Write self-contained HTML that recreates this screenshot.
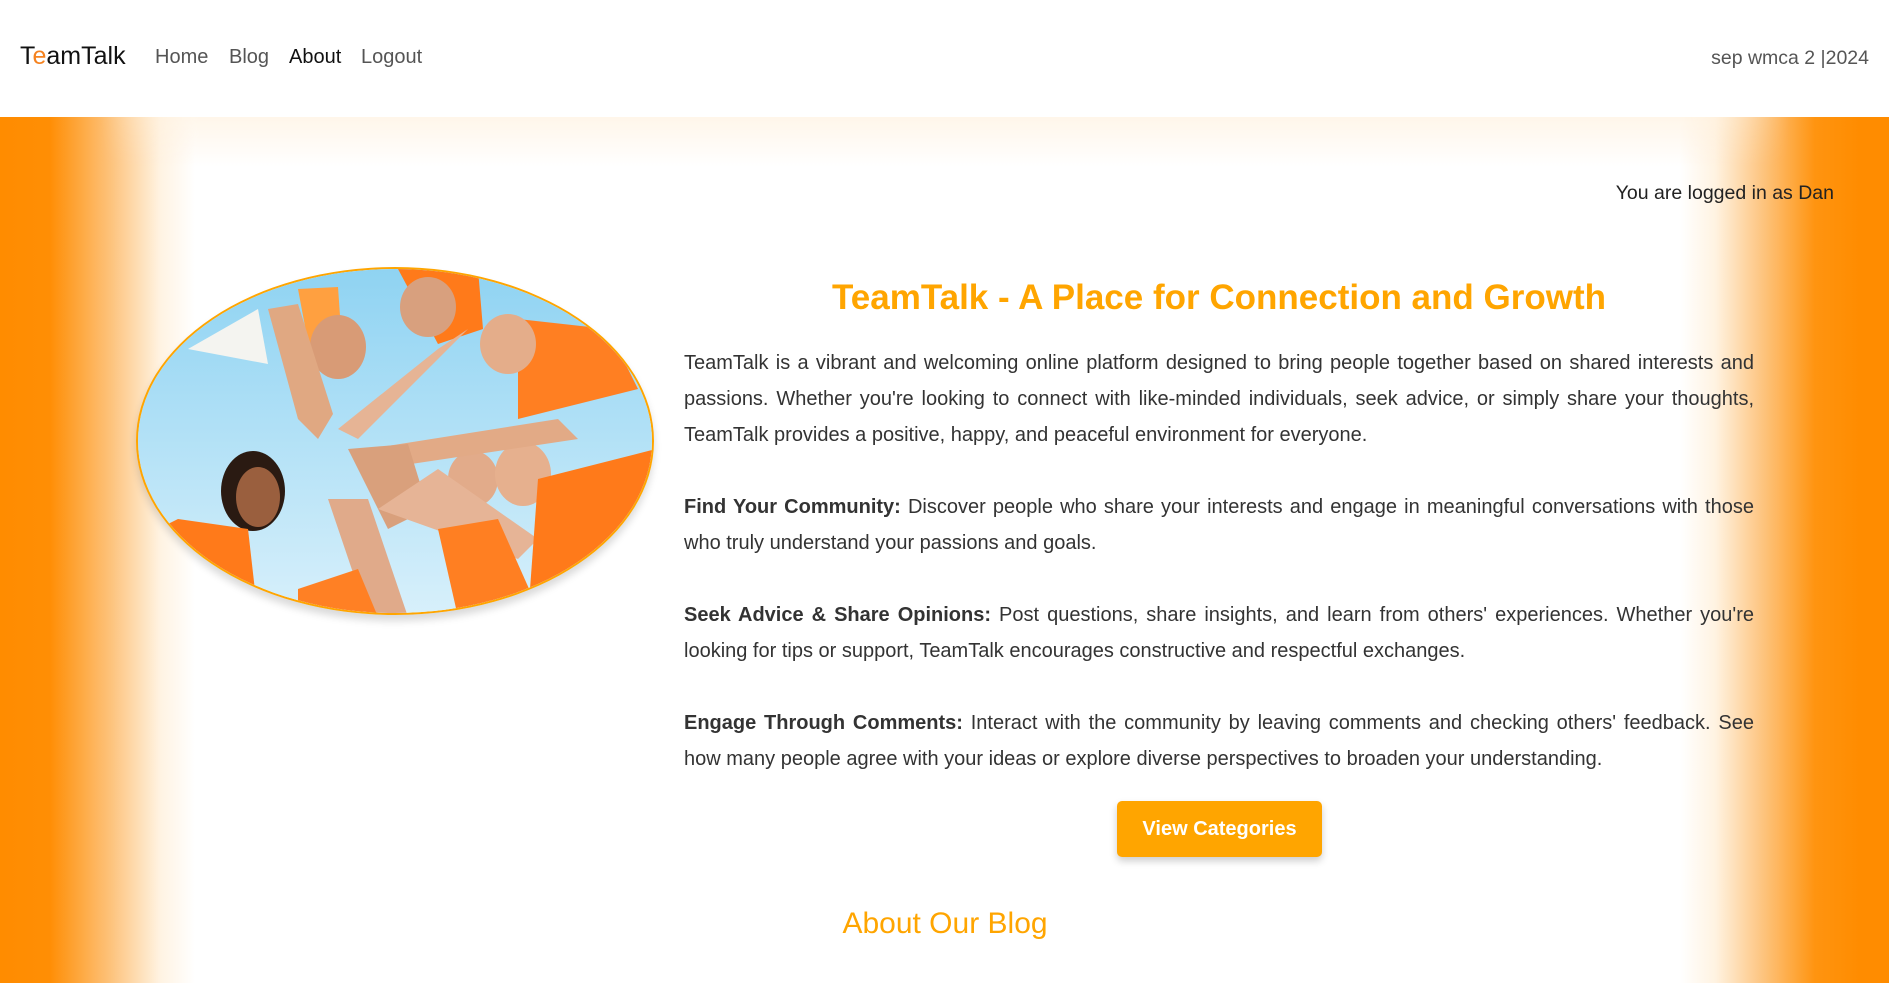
<!DOCTYPE html>
<html><head><meta charset="utf-8"><style>
*{margin:0;padding:0;box-sizing:border-box}
html,body{width:1889px;height:983px;overflow:hidden;background:#fff;font-family:"Liberation Sans",Arial,sans-serif}
.nav{height:117px;position:relative;background:#fff}
.logo{position:absolute;left:20px;top:42px;font-size:25px;color:#111}
.logo span{color:#f5821f}
.links{position:absolute;top:46px;font-size:20px;color:#555}
.links a{position:absolute;white-space:nowrap}
.right{position:absolute;right:20px;top:47px;font-size:19.5px;color:#555}
.main{position:absolute;top:117px;left:0;width:1889px;height:866px;
background:linear-gradient(90deg,#ff8c00 0,#ff8e05 50px,#fdc27a 110px,#fff3e2 160px,#fff 195px,#fff 1680px,#fff3e2 1715px,#fdc27a 1765px,#ff9410 1815px,#ff8c00 1860px)}
.topfade{position:absolute;left:100px;top:0;width:1690px;height:50px;background:linear-gradient(180deg,rgba(255,240,220,.6),rgba(255,255,255,0));-webkit-mask-image:linear-gradient(90deg,transparent 0,#000 100px,#000 1590px,transparent 1690px);mask-image:linear-gradient(90deg,transparent 0,#000 100px,#000 1590px,transparent 1690px)}
.logged{position:absolute;right:55px;top:65px;font-size:19.5px;color:#222}
.img{position:absolute;left:136px;top:150px;width:518px;height:348px;border-radius:50%;border:2px solid #ffa500;overflow:hidden;box-shadow:0 6px 8px rgba(0,0,0,.15)}
h1{position:absolute;left:684px;width:1070px;top:161px;text-align:center;font-size:35px;color:#ffa500;font-weight:bold}
.txt{position:absolute;left:684px;width:1070px;top:228px;font-size:20px;line-height:36px;color:#333;text-align:justify}
.txt p{margin-bottom:36px}
.btn{position:absolute;left:1117px;top:684px;width:205px;height:56px;background:#ffa500;border-radius:5px;color:#fff;font-weight:bold;font-size:20px;text-align:center;line-height:56px;box-shadow:0 4px 8px rgba(0,0,0,.2)}
h2{position:absolute;left:136px;width:1618px;top:790px;text-align:center;font-size:30px;font-weight:normal;color:#ffa500}
</style></head><body>
<div class="nav">
<div class="logo">T<span>e</span>amTalk</div>
<div class="links"><a style="left:155px">Home</a><a style="left:229px">Blog</a><a style="left:289px;color:#111">About</a><a style="left:361px">Logout</a></div>
<div class="right">sep wmca 2 |2024</div>
</div>
<div class="main">
<div class="topfade"></div>
<div class="logged">You are logged in as Dan</div>
<div class="img"><svg width="518" height="348" viewBox="0 0 518 348">
<defs><linearGradient id="s" x1="0" y1="0" x2="0" y2="1"><stop offset="0" stop-color="#8fd3f2"/><stop offset="1" stop-color="#d8f0fb"/></linearGradient></defs>
<rect width="518" height="348" fill="url(#s)"/>
<path d="M50 80 L120 40 L130 95 Z" fill="#f4f4f0"/>
<path d="M260 0 L340 0 L345 60 L300 75 Z" fill="#ff7a1a"/>
<path d="M380 50 L470 60 L500 120 L380 150 Z" fill="#ff7f22"/>
<path d="M160 20 L200 18 L205 90 L175 100 Z" fill="#ffa040"/>
<ellipse cx="200" cy="78" rx="28" ry="32" fill="#d89b76"/>
<ellipse cx="290" cy="38" rx="28" ry="30" fill="#d8a07e"/>
<ellipse cx="370" cy="75" rx="28" ry="30" fill="#e4ad8a"/>
<ellipse cx="115" cy="222" rx="32" ry="40" fill="#2a1a12"/>
<ellipse cx="120" cy="228" rx="22" ry="30" fill="#9a5f3e"/>
<ellipse cx="335" cy="210" rx="25" ry="28" fill="#e2ab8a"/>
<ellipse cx="385" cy="205" rx="28" ry="32" fill="#e6b08e"/>
<path d="M130 40 L160 150 L180 170 L195 145 L160 35 Z" fill="#e0a882"/>
<path d="M300 80 L330 60 L220 170 L200 160 Z" fill="#e6b495"/>
<path d="M420 150 L440 170 L240 200 L230 180 Z" fill="#e2aa86"/>
<path d="M210 180 L270 175 L290 240 L250 260 Z" fill="#d9a07c"/>
<path d="M240 240 L300 200 L400 270 L380 290 Z" fill="#e6b496"/>
<path d="M190 230 L230 230 L270 348 L230 348 Z" fill="#e0aa8a"/>
<path d="M0 270 L40 250 L110 260 L120 348 L0 348 Z" fill="#ff7a1a"/>
<path d="M160 320 L220 300 L240 348 L160 348 Z" fill="#ff8024"/>
<path d="M300 260 L360 250 L400 340 L320 348 Z" fill="#ff7f22"/>
<path d="M400 210 L518 180 L518 348 L390 348 Z" fill="#ff7a1a"/>
</svg></div>
<h1>TeamTalk - A Place for Connection and Growth</h1>
<div class="txt">
<p>TeamTalk is a vibrant and welcoming online platform designed to bring people together based on shared interests and passions. Whether you're looking to connect with like-minded individuals, seek advice, or simply share your thoughts, TeamTalk provides a positive, happy, and peaceful environment for everyone.</p>
<p><b>Find Your Community:</b> Discover people who share your interests and engage in meaningful conversations with those who truly understand your passions and goals.</p>
<p><b>Seek Advice &amp; Share Opinions:</b> Post questions, share insights, and learn from others' experiences. Whether you're looking for tips or support, TeamTalk encourages constructive and respectful exchanges.</p>
<p><b>Engage Through Comments:</b> Interact with the community by leaving comments and checking others' feedback. See how many people agree with your ideas or explore diverse perspectives to broaden your understanding.</p>
</div>
<div class="btn">View Categories</div>
<h2>About Our Blog</h2>
</div>
</body></html>
